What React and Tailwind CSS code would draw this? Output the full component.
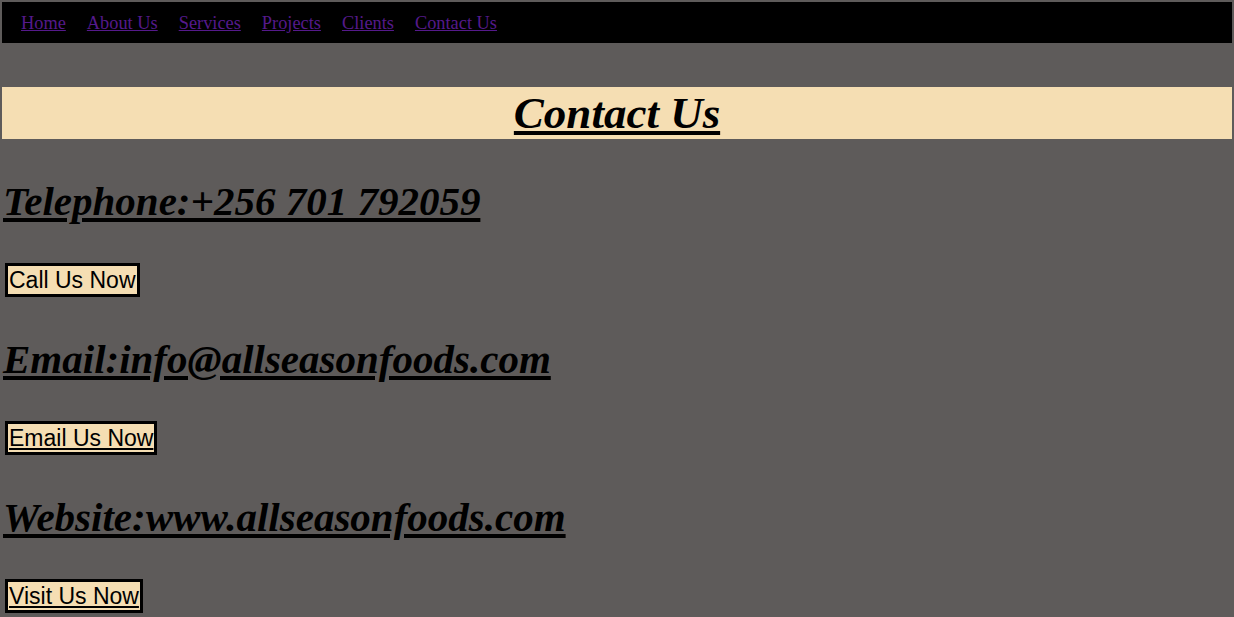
const links = ['Home', 'About Us', 'Services', 'Projects', 'Clients', 'Contact Us']

const contacts = [
  { label: 'Telephone:+256 701 792059', button: 'Call Us Now', underline: false },
  { label: 'Email:info@allseasonfoods.com', button: 'Email Us Now', underline: true },
  { label: 'Website:www.allseasonfoods.com', button: 'Visit Us Now', underline: true },
]

export default function App() {
  return (
    <div className="min-h-[617px] bg-[#5e5b5a] p-[2px] font-['Liberation_Serif',serif]">
      <nav className="flex h-[41px] items-center gap-[21px] bg-black pl-[19px] pt-[2px]">
        {links.map((l) => (
          <a key={l} href="#" className="text-[18.35px] text-[#551a8b] underline">
            {l}
          </a>
        ))}
      </nav>

      <div className="mt-[44px] flex h-[52px] items-center justify-center bg-[#f5deb3]">
        <h1 className="text-[45px] font-bold italic leading-[52px] text-black underline">Contact Us</h1>
      </div>

      {contacts.map((c) => (
        <div key={c.label}>
          <h2 className="mt-[38px] h-[48px] pl-[1px] text-[41px] font-bold italic leading-[48px] text-black underline">
            {c.label}
          </h2>
          <button
            className={`ml-[3px] mt-[38px] h-[34px] border-[3px] border-black bg-[#f5deb3] px-px font-['Liberation_Sans',sans-serif] text-[23px] leading-none text-black ${c.underline ? 'underline' : ''}`}
          >
            {c.button}
          </button>
        </div>
      ))}
    </div>
  )
}
